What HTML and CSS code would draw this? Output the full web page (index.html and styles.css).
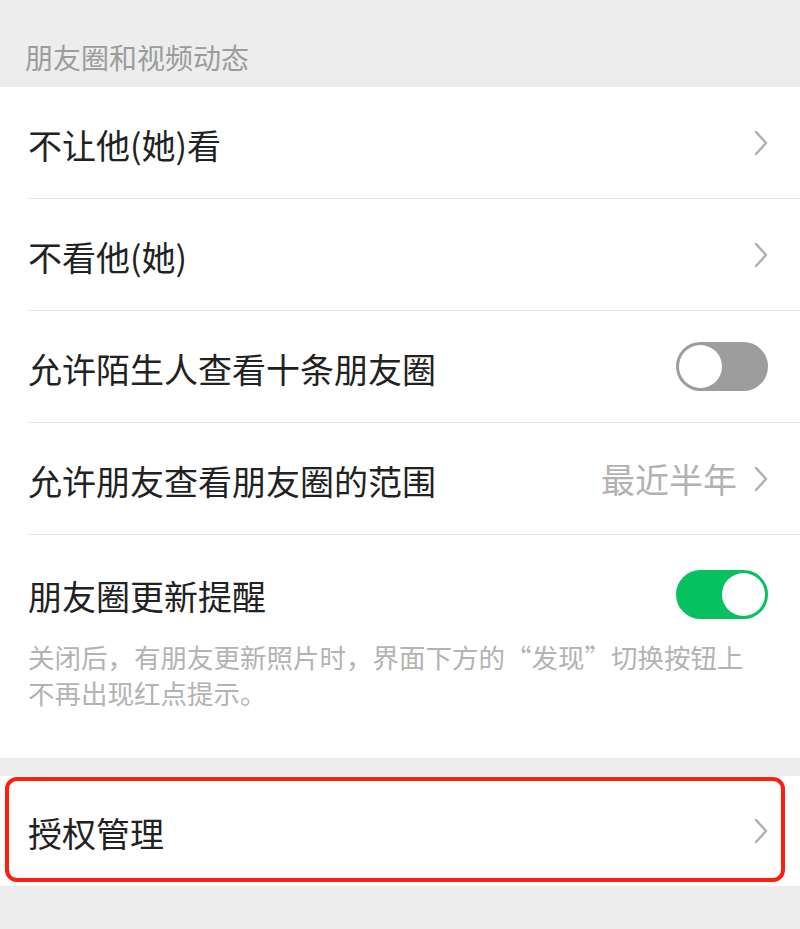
FILE: index.html
```html
<!DOCTYPE html>
<html lang="zh-CN">
<head>
    <meta charset="UTF-8">
    <meta name="viewport" content="width=device-width, initial-scale=1.0">
    <title>朋友权限</title>
    <link rel="stylesheet" href="styles.css">
</head>
<body>
    <div class="section-title">朋友圈和视频动态</div>
    <div class="group">
        <div class="cell">
            <div class="cell-inner">
                <div class="label">不让他(她)看</div>
                <svg class="arrow" width="14" height="26" viewBox="0 0 14 26"><polyline points="2,2 12,13 2,24" /></svg>
            </div>
        </div>
        <div class="cell">
            <div class="cell-inner">
                <div class="label">不看他(她)</div>
                <svg class="arrow" width="14" height="26" viewBox="0 0 14 26"><polyline points="2,2 12,13 2,24" /></svg>
            </div>
        </div>
        <div class="cell">
            <div class="cell-inner">
                <div class="label">允许陌生人查看十条朋友圈</div>
                <div class="switch"><div class="knob"></div></div>
            </div>
        </div>
        <div class="cell">
            <div class="cell-inner">
                <div class="label">允许朋友查看朋友圈的范围</div>
                <div class="value">最近半年</div>
                <svg class="arrow" width="14" height="26" viewBox="0 0 14 26"><polyline points="2,2 12,13 2,24" /></svg>
            </div>
        </div>
        <div class="cell cell-tall">
            <div class="cell-inner last">
                <div class="cell-row">
                    <div class="label">朋友圈更新提醒</div>
                    <div class="switch on"><div class="knob"></div></div>
                </div>
                <div class="note">关闭后，有朋友更新照片时，界面下方的“发现”切换按钮上<br>不再出现红点提示。</div>
            </div>
        </div>
    </div>

    <div class="group group-auth">
        <div class="cell">
            <div class="cell-inner last">
                <div class="label">授权管理</div>
                <svg class="arrow" width="14" height="26" viewBox="0 0 14 26"><polyline points="2,2 12,13 2,24" /></svg>
            </div>
        </div>
        <div class="highlight"></div>
    </div>
</body>
</html>
```

FILE: styles.css
```css
body {
    margin: 0;
    background: #ededed;
    font-family: "Noto Sans CJK SC", "Noto Sans", sans-serif;
    color: #222;
}

.section-title {
    height: 87px;
    box-sizing: border-box;
    padding: 43px 0 0 25px;
    font-size: 28px;
    line-height: 28px;
    color: #9c9c9c;
}

.group {
    background: #fff;
}

.cell {
    padding-left: 28px;
}

.cell-inner {
    height: 112px;
    box-sizing: border-box;
    border-bottom: 1px solid #e9e9e9;
    padding-right: 32px;
    display: flex;
    align-items: center;
}

.cell-inner.last {
    border-bottom: none;
}

.label {
    flex: 1;
    font-size: 34px;
    line-height: 40px;
    padding-top: 4px;
}

.value {
    font-size: 34px;
    color: #b2b2b2;
    margin-right: 17px;
}

.arrow polyline {
    fill: none;
    stroke: #b0b0b0;
    stroke-width: 2.4;
    stroke-linecap: round;
    stroke-linejoin: round;
}

.switch {
    width: 92px;
    height: 49px;
    border-radius: 25px;
    background: #9d9d9d;
    display: flex;
    align-items: center;
    padding: 0 3px;
    box-sizing: border-box;
}

.switch .knob {
    width: 43px;
    height: 43px;
    border-radius: 50%;
    background: #fff;
}

.switch.on {
    background: #07c160;
    justify-content: flex-end;
}

.cell-tall .cell-inner {
    height: auto;
    display: block;
    padding-top: 34px;
    padding-bottom: 47px;
}

.cell-row {
    display: flex;
    align-items: center;
    height: 50px;
}

.note {
    margin-top: 20px;
    font-size: 26.5px;
    line-height: 36px;
    color: #b3b3b3;
}

.group-auth {
    margin-top: 18px;
    position: relative;
}

.group-auth .cell-inner {
    height: 110px;
}

.highlight {
    position: absolute;
    left: 5px;
    right: 15px;
    top: 1px;
    bottom: 4px;
    border: 4px solid #ff1d0d;
    border-radius: 12px;
}
```
